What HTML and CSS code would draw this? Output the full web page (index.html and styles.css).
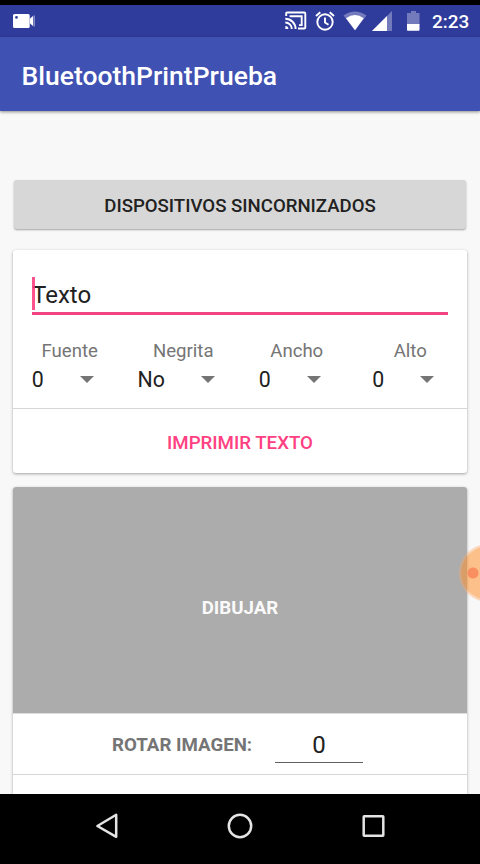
FILE: index.html
```html
<!DOCTYPE html>
<html lang="es">
<head>
<meta charset="utf-8">
<title>BluetoothPrintPrueba</title>
<link rel="stylesheet" href="styles.css">
</head>
<body>
<div class="screen">
  <div class="status">
    <svg class="camera" width="24" height="16" viewBox="0 0 24 16"><path fill="#fff" fill-rule="evenodd" d="M1.500 1h13.700q1.500 0 1.500 1.500v11q0 1.500-1.500 1.500H1.500Q0 15 0 13.500v-11Q0 1 1.500 1zM3.500 3a1.400 1.400 0 1 0 0 2.800 1.400 1.400 0 0 0 0-2.800z"/><path fill="#fff" d="M17 5.500 20 3v10l-3-2.500z"/><path fill="#9ca2d2" d="M20.500 2.500h1.300v11h-1.300z"/></svg>
    <svg class="cast" width="22" height="20" viewBox="0 0 22 20" fill="none" stroke="#fff" stroke-width="1.900"><path d="M1.200 5V2.500q0-1 1-1h17.100q1 0 1 1v14q0 1-1 1H13"/><path d="M5.500 6V5.300h11.200v8.800H14"/><path d="M.3 7.700a10.300 10.300 0 0 1 10.300 10.300M.3 11.500a6.500 6.500 0 0 1 6.500 6.500"/><path fill="#fff" stroke="none" d="M.3 15a3.100 3.100 0 0 1 3.100 3.100H.3z"/></svg>
    <svg class="alarm" width="20" height="20" viewBox="0 0 20 20" fill="none" stroke="#fff" stroke-width="1.900"><circle cx="10" cy="11" r="7.700"/><path d="M10 6.500v5l3.500 2.200M1 5l4.300-3.700M19 5l-4.300-3.700"/></svg>
    <svg class="wifi" width="24" height="20" viewBox="0 0 24 20"><path fill="#747bbd" d="M.5 4.500Q12-3.500 23.500 4.500L12 19.300z"/><path fill="#fff" d="M3 7.200Q12 .8 20.700 7.200L12 19.300z"/></svg>
    <svg class="signal" width="20" height="20" viewBox="0 0 20 20"><path fill="#747bbd" d="M20 0v20H0z"/><path fill="#fff" d="M15 5v15H0z"/></svg>
    <svg class="battery" width="13" height="20" viewBox="0 0 13 20"><path fill="#747bbd" d="M4 0h5v2h3.500v12H0V2h4z"/><path fill="#fff" d="M0 13h12.500v6q0 .8-.8.800H.8q-.8 0-.8-.8z"/></svg>
    <span class="clock">2:23</span>
  </div>
  <header class="appbar">BluetoothPrintPrueba</header>
  <main class="content">
    <button class="devices">DISPOSITIVOS SINCORNIZADOS</button>
    <section class="card print-card">
      <div class="field"><i class="cursor"></i>Texto</div>
      <div class="options">
        <div class="option"><span class="label">Fuente</span><span class="spinner">0<i class="caret"></i></span></div>
        <div class="option"><span class="label">Negrita</span><span class="spinner">No<i class="caret"></i></span></div>
        <div class="option"><span class="label">Ancho</span><span class="spinner">0<i class="caret"></i></span></div>
        <div class="option"><span class="label">Alto</span><span class="spinner">0<i class="caret"></i></span></div>
      </div>
      <div class="action">IMPRIMIR TEXTO</div>
    </section>
    <section class="card draw-card">
      <div class="canvas">DIBUJAR</div>
      <div class="rotate"><span class="rotate-label">ROTAR IMAGEN:</span><span class="angle">0</span></div>
    </section>
    <div class="bubble"></div>
  </main>
  <nav class="nav">
    <svg width="24" height="28" viewBox="0 0 24 28"><path d="M21.200 2.800v22L2.400 14z"/></svg>
    <svg width="28" height="28" viewBox="0 0 28 28"><circle cx="14" cy="14" r="11.200"/></svg>
    <svg width="24" height="28" viewBox="0 0 24 28"><rect x="2.700" y="4.200" width="19.600" height="19.600" rx=".5"/></svg>
  </nav>
</div>
</body>
</html>
```
FILE: styles.css
```css
* { box-sizing: border-box; }
body { margin: 0; font-family: Roboto, sans-serif; background: #000; }
.screen { width: 480px; height: 864px; padding-top: 5px; display: flex; flex-direction: column; overflow: hidden; }

.status { height: 32px; flex: none; background: #303c9b; display: flex; align-items: center; padding: 0 11px 0 13px; }
.camera { margin-right: auto; }
.cast { margin-right: 8px; }
.alarm { margin-right: 8px; }
.wifi { margin-right: 5px; }
.signal { margin-right: 15px; }
.battery { margin-right: 12px; }
.clock { width: 37px; line-height: 22px; padding-top: 1px; color: #fff; font-size: 18.900px; font-weight: 500; white-space: nowrap; }

.appbar { height: 74px; flex: none; background: #3f51b3; color: #fff; font-size: 26.500px; font-weight: 500; line-height: 78px; padding-left: 21.500px; z-index: 1; box-shadow: 0 1px 3px rgba(0,0,0,.45); }

.content { position: relative; flex: 1; min-height: 0; overflow: hidden; background: #f8f8f8; padding: 69px 13px 0; }
.devices { display: block; width: 452px; height: 49px; margin: 0 1px 21px; padding: 2px 0 0; border: 0; border-radius: 3px; background: #d7d7d7; color: #212121; font: 500 18.600px Roboto, sans-serif; box-shadow: 0 1px 2px rgba(0,0,0,.35); }
.card { background: #fff; border-radius: 3px; box-shadow: 0 1px 3px rgba(0,0,0,.35); overflow: hidden; }
.print-card { height: 223px; margin-bottom: 14px; }

.field { position: relative; height: 65px; margin: 0 19px; border-bottom: 3px solid #f0437f; padding-top: 31px; font-size: 24px; line-height: 28px; color: #212121; }
.cursor { position: absolute; left: 0; top: 27px; width: 3px; height: 33px; background: #ff4081; opacity: .9; }
.options { display: grid; grid-template-columns: repeat(4, 1fr); height: 94px; padding-top: 24px; border-bottom: 1px solid #d6d6d6; }
.option { display: flex; flex-direction: column; align-items: center; }
.label { font-size: 18.600px; line-height: 24px; color: #757575; }
.spinner { display: flex; align-items: center; padding: 0 25px 0 11px; font-size: 21.300px; line-height: 34px; color: #212121; }
.caret { margin: -2px 0 0 36px; border: 7px solid transparent; border-top-color: #757575; border-bottom: 0; }
.action { height: 64px; line-height: 69px; text-align: center; font-size: 18.700px; font-weight: 500; color: #ff4081; }

.draw-card { height: 340px; }
.canvas { height: 226px; line-height: 243px; background: #acacac; color: #fafafa; text-align: center; font-size: 18.700px; font-weight: 700; }
.rotate { height: 62px; border-top: 1px solid #ddd; border-bottom: 1px solid #d6d6d6; display: flex; padding-left: 99px; }
.rotate-label { width: 163px; line-height: 63px; font-size: 18.700px; font-weight: 700; color: #757575; }
.angle { width: 88px; height: 49px; border-bottom: 1px solid #606060; text-align: center; line-height: 62px; font-size: 24px; color: #212121; }

.bubble { position: absolute; right: -38px; top: 433px; width: 59px; height: 58px; border-radius: 50%; border: 2px solid rgba(255,165,95,.4); background: radial-gradient(circle at 12px 27px, #f98e60 0 5px, transparent 6px), rgba(255,146,50,.55); background-clip: padding-box; }

.nav { height: 70px; flex: none; background: #000; display: flex; justify-content: space-between; padding: 18px 95px 0; }
.nav svg { fill: none; stroke: #e4e4e4; stroke-width: 2.500; stroke-linejoin: round; }
```
